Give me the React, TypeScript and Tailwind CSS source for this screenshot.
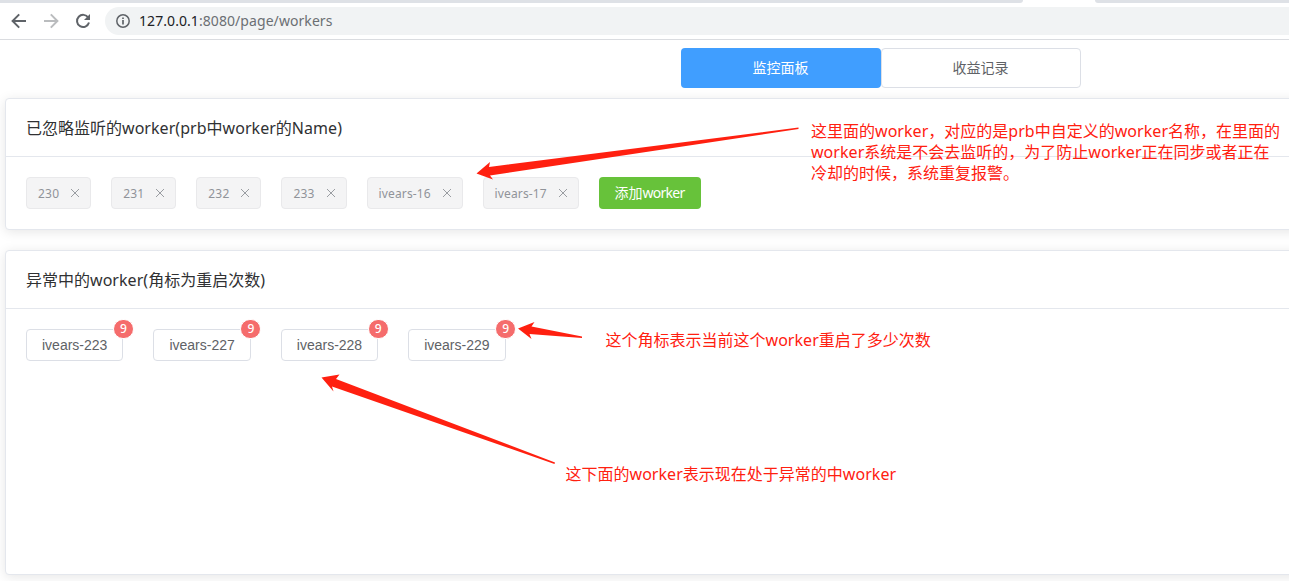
import type { ReactNode } from "react";

const ignored = ["230", "231", "232", "233", "ivears-16", "ivears-17"];
const failing = ["ivears-223", "ivears-227", "ivears-228", "ivears-229"];

function Mixed({ text }: { text: string }) {
  return (
    <>
      {text.split(/([\x20-\x7e]+)/).map((part, i) =>
        i % 2 ? (
          <span key={i} className="tracking-[0.04px]">
            {part}
          </span>
        ) : (
          part
        ),
      )}
    </>
  );
}

function Toolbar() {
  return (
    <header className="h-10 border-b border-[#dadce0] bg-white">
      <div className="flex h-[3px] justify-between">
        <div className="w-[1023px] rounded-br bg-[#dee1e6]" />
        <div className="w-[194px] rounded-bl bg-[#dee1e6]" />
      </div>
      <div className="flex h-9 items-center">
        <svg className="ml-[11px] size-4 shrink-0" viewBox="0 0 16 16" fill="none" stroke="#5f6368" strokeWidth="2">
          <path d="M15 8H2.5M8.2 1.4 1.6 8l6.6 6.6" />
        </svg>
        <svg className="ml-4 size-4 shrink-0" viewBox="0 0 16 16" fill="none" stroke="#babcbe" strokeWidth="2">
          <path d="M1 8h12.500M7.800 1.400 14.400 8l-6.600 6.600" />
        </svg>
        <svg className="ml-4 size-4 shrink-0" viewBox="0 0 16 16" fill="none" stroke="#5f6368" strokeWidth="2">
          <path d="M13.3 4.7A6.1 6.1 0 1 0 14 9.6" />
          <path d="M15 1v6H9z" fill="#5f6368" stroke="none" />
        </svg>
        <div className="ml-[14px] flex h-7 flex-1 items-center rounded-l-full bg-[#f1f3f4] pl-[11px]">
          <svg className="size-[14px] shrink-0" viewBox="0 0 14 14" fill="none" stroke="#5f6368" strokeWidth="1.5">
            <circle cx="7" cy="7" r="6.2" />
            <path d="M7 6v4.6M7 3.4v1.7" strokeWidth="1.7" />
          </svg>
          <span className="ml-[9px] pb-[2px] text-[14px] tracking-[0.07px] text-[#6b6f73]">
            <span className="text-[#202124]">127.0.0.1</span>:8080/page/workers
          </span>
        </div>
      </div>
    </header>
  );
}

function Card({ title, className, children }: { title: string; className: string; children: ReactNode }) {
  return (
    <section
      className={`ml-[5px] flex w-[1752px] flex-col rounded border border-[#e4e7ed] bg-white shadow-[0_2px_12px_0_rgba(0,0,0,0.1)] ${className}`}
    >
      <h2 className="flex h-[58px] shrink-0 items-center border-b border-[#e4e7ed] px-5 text-[16px] text-[#303133]">
        <span>
          <Mixed text={title} />
        </span>
      </h2>
      <div className="flex px-5 pt-5">{children}</div>
    </section>
  );
}

function Tag({ name }: { name: string }) {
  return (
    <span
      className={`mr-5 flex h-8 items-center justify-between rounded border border-[#e9e9eb] bg-[#f4f4f5] pr-[10px] pl-[11px] text-[12px] text-[#909399] ${
        name.length > 3 ? "w-24" : "w-[65.15px]"
      }`}
    >
      <span className={name.length > 3 ? "pt-px tracking-[0.14px]" : "pt-px tracking-[0.2px]"}>{name}</span>
      <svg className="size-[10px]" viewBox="0 0 10 10" stroke="#909399" strokeWidth="0.9">
        <path d="m1 1 8 8M9 1 1 9" />
      </svg>
    </span>
  );
}

export default function App() {
  return (
    <div className="relative h-[581px] w-full overflow-hidden bg-white font-['Noto_Sans','Noto_Sans_CJK_SC',sans-serif]">
      <Toolbar />
      <nav className="flex h-[58px] pt-2 pl-[681px] text-[14px]">
        <button className="h-10 w-[200px] rounded bg-[#409eff] pr-px pb-[2px] text-white">监控面板</button>
        <button className="h-10 w-[200px] rounded border border-[#dcdfe6] bg-white pr-px pb-[2px] text-[#606266]">
          收益记录
        </button>
      </nav>

      <Card title="已忽略监听的worker(prb中worker的Name)" className="h-[132px]">
        {ignored.map((name) => (
          <Tag key={name} name={name} />
        ))}
        <button className="h-8 w-[102px] rounded bg-[#67c23a] pb-[2px] text-[14px] text-white">
          添加<span className="tracking-[-0.75px]">worker</span>
        </button>
      </Card>

      <Card title="异常中的worker(角标为重启次数)" className="mt-5 h-[325px]">
        {failing.map((name) => (
          <div key={name} className="relative mr-[30px]">
            <button className="h-8 w-[97.4px] rounded border border-[#dcdfe6] bg-white font-['Liberation_Sans',sans-serif] text-[14px] text-[#606266]">
              {name}
            </button>
            <span className="absolute -top-[10px] -right-[10.6px] flex h-5 w-[21px] items-center justify-center rounded-full border border-white bg-[#f56c6c] text-[12px] font-medium text-white">
              9
            </span>
          </div>
        ))}
      </Card>

      <svg className="pointer-events-none absolute inset-0" width="1289" height="581" fill="#ff2010">
        <path d="M476.500 173.500 490 162l-1 5 309.500-39.500v1.500L490 175.500l3 4z" />
        <path d="M518 328.500 534.500 322l-3 4.500 50.500 10v1.500l-52.500-4 2 5z" />
        <path d="M321.500 377.500 339.500 374.500l-3.500 4.500L555 462.500l-.5 1.500L332 386.500l1.500 5z" />
      </svg>
      <div className="absolute top-[121px] left-[811px] text-[16px] leading-[21px] whitespace-nowrap text-[#ff2010]">
        <p>
          <Mixed text="这里面的worker，对应的是prb中自定义的worker名称，在里面的" />
        </p>
        <p>
          <Mixed text="worker系统是不会去监听的，为了防止worker正在同步或者正在" />
        </p>
        <p>
          <Mixed text="冷却的时候，系统重复报警。" />
        </p>
      </div>
      <p className="absolute top-[330px] left-[605.5px] text-[16px] leading-[21px] whitespace-nowrap text-[#ff2010]">
        <Mixed text="这个角标表示当前这个worker重启了多少次数" />
      </p>
      <p className="absolute top-[464px] left-[565.5px] text-[16px] leading-[21px] whitespace-nowrap text-[#ff2010]">
        <Mixed text="这下面的worker表示现在处于异常的中worker" />
      </p>
    </div>
  );
}
